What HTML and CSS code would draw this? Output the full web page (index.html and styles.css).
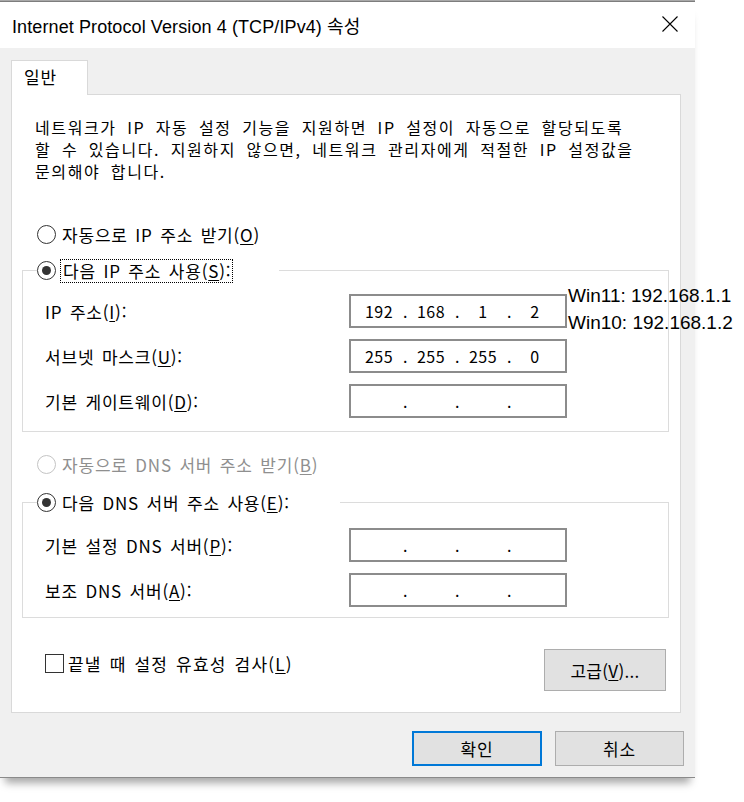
FILE: index.html
```html
<!DOCTYPE html>
<html lang="ko">
  <head>
    <meta charset="UTF-8" />
    <meta name="viewport" content="width=device-width, initial-scale=1.0" />
    <title>Internet Protocol Version 4 (TCP/IPv4) 속성</title>
    <link rel="stylesheet" href="styles.css">
  </head>
  <body>
    <div class="back-edge"></div>

    <div class="dialog">
      <div class="titlebar">
        <span class="title">Internet Protocol Version 4 (TCP/IPv4) 속성</span>
        <svg class="close" viewBox="0 0 16 16">
          <path d="M0.5 0.5 L15.5 15.5 M15.5 0.5 L0.5 15.5" />
        </svg>
      </div>

      <div class="dialog-body">
        <div class="tabs">
          <div class="tab">일반</div>
        </div>

        <div class="panel">
          <p class="intro">
            네트워크가 IP 자동 설정 기능을 지원하면 IP 설정이 자동으로 할당되도록<br>
            할 수 있습니다. 지원하지 않으면, 네트워크 관리자에게 적절한 IP 설정값을<br>
            문의해야 합니다.
          </p>

          <div class="option option-auto">
            <span class="radio"></span>
            <span class="option-text">자동으로 IP 주소 받기(<u>O</u>)</span>
          </div>

          <fieldset class="group">
            <legend class="option legend-ip">
              <span class="radio checked"></span>
              <span class="option-text focus">다음 IP 주소 사용(<u>S</u>):</span>
            </legend>
            <div class="fields">
              <label class="field-label">IP 주소(<u>I</u>):</label>
              <div class="ipbox">
                <span>192</span><i>.</i><span>168</span><i>.</i><span>1</span><i>.</i><span>2</span>
              </div>
              <label class="field-label">서브넷 마스크(<u>U</u>):</label>
              <div class="ipbox">
                <span>255</span><i>.</i><span>255</span><i>.</i><span>255</span><i>.</i><span>0</span>
              </div>
              <label class="field-label">기본 게이트웨이(<u>D</u>):</label>
              <div class="ipbox">
                <span></span><i>.</i><span></span><i>.</i><span></span><i>.</i><span></span>
              </div>
            </div>
          </fieldset>

          <div class="option option-auto disabled">
            <span class="radio"></span>
            <span class="option-text">자동으로 DNS 서버 주소 받기(<u>B</u>)</span>
          </div>

          <fieldset class="group group-dns">
            <legend class="option legend-dns">
              <span class="radio checked"></span>
              <span class="option-text">다음 DNS 서버 주소 사용(<u>E</u>):</span>
            </legend>
            <div class="fields">
              <label class="field-label">기본 설정 DNS 서버(<u>P</u>):</label>
              <div class="ipbox">
                <span></span><i>.</i><span></span><i>.</i><span></span><i>.</i><span></span>
              </div>
              <label class="field-label">보조 DNS 서버(<u>A</u>):</label>
              <div class="ipbox">
                <span></span><i>.</i><span></span><i>.</i><span></span><i>.</i><span></span>
              </div>
            </div>
          </fieldset>

          <div class="panel-footer">
            <div class="check-option">
              <span class="checkbox"></span>
              <span class="option-text">끝낼 때 설정 유효성 검사(<u>L</u>)</span>
            </div>
            <button class="btn btn-advanced">고급(<u>V</u>)...</button>
          </div>
        </div>

        <div class="actions">
          <button class="btn btn-default">확인</button>
          <button class="btn">취소</button>
        </div>
      </div>
    </div>

    <!-- 스크린샷 위에 덧붙인 메모 -->
    <div class="note">
      <div>Win11: 192.168.1.1</div>
      <div>Win10: 192.168.1.2</div>
    </div>
  </body>
</html>
```

FILE: styles.css
```css
* {
  margin: 0;
  padding: 0;
  box-sizing: border-box;
}

body {
  position: relative;
  width: 744px;
  height: 802px;
  overflow: hidden;
  background: #fff;
  color: #000;
  font-family: "Noto Sans CJK KR", sans-serif;
  font-size: 17px;
  letter-spacing: 0.8px;
  word-spacing: 2px;
}

u {
  text-decoration-thickness: 1px;
  text-underline-offset: 2px;
}

.back-edge {
  width: 695px;
  height: 2px;
  background: #7d7d7d;
  border-top: 1px solid #a8a8a8;
}

.dialog {
  width: 695px;
  background: #f0f0f0;
  border-bottom: 1px solid #8a8a8a;
  box-shadow: 0 10px 8px -5px rgba(0, 0, 0, 0.35);
}

.titlebar {
  height: 46px;
  background: #fff;
  display: flex;
  align-items: center;
  justify-content: space-between;
  padding: 0 17px 0 12px;
}

.title {
  font-family: "Liberation Sans", "Noto Sans CJK KR", sans-serif;
  font-size: 18px;
  letter-spacing: 0.1px;
  word-spacing: 0;
}

.close {
  width: 16px;
  height: 16px;
  margin-top: -2px;
  fill: none;
  stroke: #000;
  stroke-width: 1.1;
}

.dialog-body {
  padding: 12px 14px 11px 11px;
}

.tabs {
  display: flex;
}

.tab {
  position: relative;
  z-index: 1;
  width: 77px;
  height: 35px;
  margin-bottom: -1px;
  padding-left: 12px;
  line-height: 31px;
  background: #fff;
  border: 1px solid #d9d9d9;
  border-bottom: none;
}

.panel {
  width: 670px;
  background: #fff;
  border: 1px solid #d9d9d9;
  padding: 21px 0 21px 0;
}

.intro {
  margin-left: 23px;
  font-size: 16px;
  line-height: 22px;
  letter-spacing: 1.6px;
  word-spacing: 4.5px;
}

.option {
  display: flex;
  align-items: center;
  height: 24px;
}

.option-auto {
  margin: 40px 0 0 25px;
}

.option-auto.disabled {
  margin-top: 20px;
  color: #8f8f8f;
}

.radio {
  flex: none;
  width: 19px;
  height: 19px;
  border: 1.5px solid #333;
  border-radius: 50%;
  display: grid;
  place-items: center;
  margin-right: 6px;
}

.radio.checked::after {
  content: "";
  width: 9px;
  height: 9px;
  border-radius: 50%;
  background: #333;
}

.disabled .radio {
  border-color: #c4c4c4;
}

.option-text {
  white-space: nowrap;
}

.focus {
  margin-left: -2px;
  padding: 0 1px 0 2px;
  height: 24px;
  line-height: 22px;
  border: 1px dotted #000;
}

.group {
  width: 647px;
  margin: 12px 0 0 10px;
  border: 1px solid #dcdcdc;
  padding: 0 0 13px 0;
}

.group-dns {
  margin-top: 14px;
  padding-bottom: 10px;
}

.group .option {
  height: 25px;
  margin-left: 14px;
}

.legend-ip {
  padding-right: 46px;
}

.legend-dns {
  padding-right: 50px;
}

.fields {
  display: grid;
  grid-template-columns: 304px 218px;
  grid-auto-rows: 34px;
  row-gap: 11px;
  align-items: center;
  margin: 11px 0 0 22px;
}

.group-dns .fields {
  margin-top: 13px;
}

.ipbox {
  height: 34px;
  display: flex;
  align-items: center;
  padding-left: 4px;
  border: 2px solid #8c8c8c;
  background: #fff;
  font-size: 16px;
  letter-spacing: 0.5px;
}

.ipbox span {
  width: 48px;
  text-align: center;
}

.ipbox i {
  width: 4px;
  font-style: normal;
  text-align: center;
}

.panel-footer {
  display: flex;
  align-items: flex-start;
  justify-content: space-between;
  margin: 31px 14px 0 33px;
}

.check-option {
  display: flex;
  align-items: center;
  gap: 4px;
  height: 22px;
  margin-top: 3px;
}

.check-option .option-text {
  letter-spacing: 1.2px;
}

.checkbox {
  width: 19px;
  height: 19px;
  border: 1.5px solid #333;
}

.btn {
  font-family: inherit;
  font-size: 17px;
  letter-spacing: 0.8px;
  color: #000;
  background: #e1e1e1;
  border: 1px solid #adadad;
  height: 35px;
  width: 129px;
}

.btn-advanced {
  width: 122px;
  height: 42px;
  letter-spacing: 0.3px;
}

.actions {
  display: flex;
  justify-content: flex-end;
  gap: 13px;
  margin: 18px -3px 0 0;
}

.btn-default {
  width: 130px;
  border: 2px solid #0078d7;
}

.note {
  position: absolute;
  left: 568px;
  top: 282px;
  font-family: "Liberation Sans", sans-serif;
  font-size: 19px;
  line-height: 27px;
  letter-spacing: 0;
  word-spacing: 0;
}
```
